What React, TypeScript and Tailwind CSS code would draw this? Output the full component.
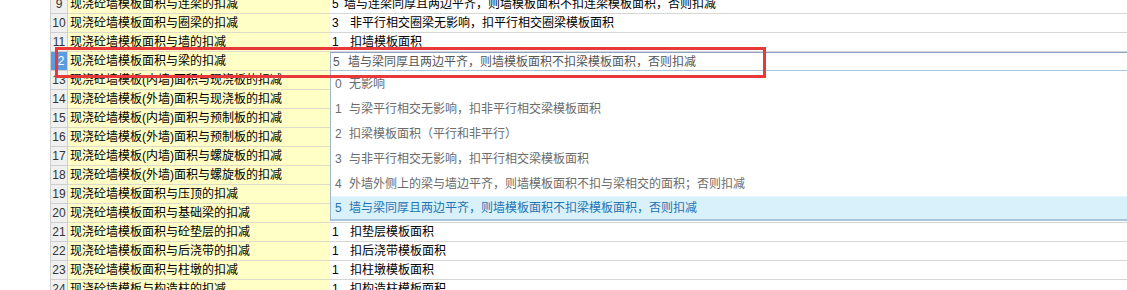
const rows = [
  { no: 9, name: '现浇砼墙模板面积与连梁的扣减', num: '5', value: '墙与连梁同厚且两边平齐，则墙模板面积不扣连梁模板面积，否则扣减', tight: true },
  { no: 10, name: '现浇砼墙模板面积与圈梁的扣减', num: '3', value: '非平行相交圈梁无影响，扣平行相交圈梁模板面积' },
  { no: 11, name: '现浇砼墙模板面积与墙的扣减', num: '1', value: '扣墙模板面积' },
  { no: 12, name: '现浇砼墙模板面积与梁的扣减', num: '5', value: '墙与梁同厚且两边平齐，则墙模板面积不扣梁模板面积，否则扣减', selected: true },
  { no: 13, name: '现浇砼墙模板(内墙)面积与现浇板的扣减' },
  { no: 14, name: '现浇砼墙模板(外墙)面积与现浇板的扣减' },
  { no: 15, name: '现浇砼墙模板(内墙)面积与预制板的扣减' },
  { no: 16, name: '现浇砼墙模板(外墙)面积与预制板的扣减' },
  { no: 17, name: '现浇砼墙模板(内墙)面积与螺旋板的扣减' },
  { no: 18, name: '现浇砼墙模板(外墙)面积与螺旋板的扣减' },
  { no: 19, name: '现浇砼墙模板面积与压顶的扣减' },
  { no: 20, name: '现浇砼墙模板面积与基础梁的扣减' },
  { no: 21, name: '现浇砼墙模板面积与砼垫层的扣减', num: '1', value: '扣垫层模板面积' },
  { no: 22, name: '现浇砼墙模板面积与后浇带的扣减', num: '1', value: '扣后浇带模板面积' },
  { no: 23, name: '现浇砼墙模板面积与柱墩的扣减', num: '1', value: '扣柱墩模板面积' },
  { no: 24, name: '现浇砼墙模板与构造柱的扣减', num: '1', value: '扣构造柱模板面积' },
];

const options = [
  { num: '0', text: '无影响' },
  { num: '1', text: '与梁平行相交无影响，扣非平行相交梁模板面积' },
  { num: '2', text: '扣梁模板面积（平行和非平行）' },
  { num: '3', text: '与非平行相交无影响，扣平行相交梁模板面积' },
  { num: '4', text: '外墙外侧上的梁与墙边平齐，则墙模板面积不扣与梁相交的面积；否则扣减' },
  { num: '5', text: '墙与梁同厚且两边平齐，则墙模板面积不扣梁模板面积，否则扣减', active: true },
];

const font = 'font-["Liberation_Sans","Noto_Sans_CJK_SC",sans-serif]';

const App = () => {
  return (
    <div className={`relative w-[1127px] h-[290px] overflow-hidden bg-white text-[12px] ${font}`}>
      <div className="-mt-[5px] flex flex-col">
        {rows.map((row) => (
          <div key={row.no} className="flex h-[19px]">
            <div className="w-[50px] bg-white" />
            <div
              className={`w-[18px] flex items-center justify-center border-l border-b border-r border-[#cfcfcf] text-[12px] ${
                row.selected ? 'bg-[#5b9be0] text-white' : 'bg-[#f0f0f0] text-[#333]'
              }`}
            >
              {row.selected ? <span className="pl-[4px]">2</span> : row.no}
            </div>
            <div className="w-[262px] flex items-center pl-[2px] bg-[#ffffc6] border-b border-[#dcdcc8] text-black whitespace-nowrap overflow-hidden">
              {row.name}
            </div>
            {row.selected ? (
              <div className="flex-1 flex items-center border-t border-b border-l border-t-[#8aa4c4] border-b-[#a9c6dc] border-l-[#9fb6cf] bg-white text-[#555] whitespace-nowrap">
                <span className="w-[17px] pl-[2px]">{row.num}</span>
                <span>{row.value}</span>
              </div>
            ) : (
              <div className="flex-1 flex items-center border-b border-[#d6d6d6] bg-white text-black whitespace-nowrap">
                <span className={`${row.tight ? 'w-[14px]' : 'w-[20px]'} pl-[2px]`}>{row.num}</span>
                <span>{row.value}</span>
              </div>
            )}
          </div>
        ))}
      </div>

      {/* dropdown list */}
      <div className="absolute left-[330px] top-[71px] right-0 flex flex-col bg-white border-l border-[#9fb6cf]">
        {options.map((opt) => (
          <div
            key={opt.num}
            className={`h-[25px] flex items-center pl-[4px] whitespace-nowrap ${
              opt.active
                ? 'bg-[#d9f1fa] text-[#1e73b4] border-t border-[#e6f6fc] border-b-2 border-b-[#a8c6de]'
                : 'text-[#6b6b6b]'
            }`}
          >
            <span className="w-[14px]">{opt.num}</span>
            <span>{opt.text}</span>
          </div>
        ))}
      </div>

      {/* annotation */}
      <div className="absolute left-[55px] top-[47px] w-[711px] h-[31px] border-[3px] border-[#e8393a]" />
    </div>
  );
};

export default App;
